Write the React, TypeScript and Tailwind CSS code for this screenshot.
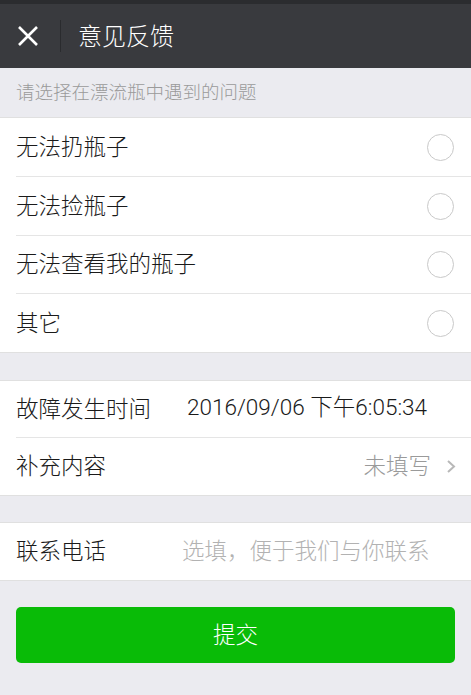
import React from "react";

const font = { fontFamily: '"Noto Sans CJK SC", "Noto Sans", sans-serif' };

function Radio() {
  return <div className="w-[27px] h-[27px] rounded-full border border-[#c9c9c9] mr-[17px]" />;
}

export default function App() {
  const options = ["无法扔瓶子", "无法捡瓶子", "无法查看我的瓶子", "其它"];
  const heights = ["h-[59px]", "h-[59px]", "h-[58px]", "h-[58px]"];
  return (
    <div className="w-[471px] h-[695px] bg-[#ebebf0] flex flex-col overflow-hidden font-light" style={font}>
      <div className="h-[4px] bg-[#2b2c2f]" />
      <div className="h-[64px] bg-[#393a3e] flex items-center">
        <svg width="22" height="22" viewBox="0 0 22 22" className="ml-[17px]">
          <path d="M2 2 L20 20 M20 2 L2 20" stroke="#ffffff" strokeWidth="2.6" />
        </svg>
        <div className="w-px h-[32px] bg-[#2a2b2e] ml-[21px]" />
        <div className="ml-[17px] mb-[2px] text-[24px] text-[#ffffff] leading-none">意见反馈</div>
      </div>
      <div className="h-[50px] flex items-center px-[16px] text-[18.5px] text-[#9a9a9a] border-b border-[#e0e0e0]">
        <span className="mb-[2px]">请选择在漂流瓶中遇到的问题</span>
      </div>
      <div className="bg-white">
        {options.map((o, i) => (
          <div key={o} className="pl-[16px]">
            <div
              className={
                heights[i] +
                " flex items-center justify-between " +
                (i < options.length - 1 ? "border-b border-[#e5e5e5]" : "")
              }
            >
              <span className="text-[22.5px] text-[#1a1a1a] mb-[3px]">{o}</span>
              <Radio />
            </div>
          </div>
        ))}
      </div>
      <div className="h-[28px] border-t border-[#e0e0e0]" />
      <div className="bg-white border-t border-b border-[#e0e0e0]">
        <div className="pl-[16px]">
          <div className="h-[57px] flex items-center border-b border-[#e5e5e5]">
            <span className="text-[22.5px] text-[#1a1a1a] w-[171px] mb-[3px]">故障发生时间</span>
            <span
              className="text-[22.5px] text-[#1a1a1a] font-light mb-[3px]"
              style={{ fontFamily: 'Roboto, "Noto Sans CJK SC", sans-serif' }}
            >
              2016/09/06 下午6:05:34
            </span>
          </div>
          <div className="h-[57px] flex items-center justify-between">
            <span className="text-[22.5px] text-[#1a1a1a] mb-[3px]">补充内容</span>
            <div className="flex items-center mr-[15px]">
              <span className="text-[22.5px] text-[#9a9a9a] mb-[3px]">未填写</span>
              <svg width="10" height="15" viewBox="0 0 10 15" className="ml-[15px]">
                <path d="M2 2 L8 7.5 L2 13" stroke="#b8b8b8" strokeWidth="2" fill="none" />
              </svg>
            </div>
          </div>
        </div>
      </div>
      <div className="h-[26px]" />
      <div className="bg-white border-t border-b border-[#e0e0e0] h-[59px] flex items-center pl-[16px]">
        <span className="text-[22.5px] text-[#1a1a1a] w-[166px] mb-[3px]">联系电话</span>
        <span className="text-[22.5px] text-[#b2b2b2] mb-[3px]">选填，便于我们与你联系</span>
      </div>
      <div className="px-[16px] mt-[26px]">
        <div className="h-[56px] rounded-[5px] bg-[#09bb07] flex items-center justify-center text-[22.5px] text-white">
          <span className="mb-[3px]">提交</span>
        </div>
      </div>
    </div>
  );
}
